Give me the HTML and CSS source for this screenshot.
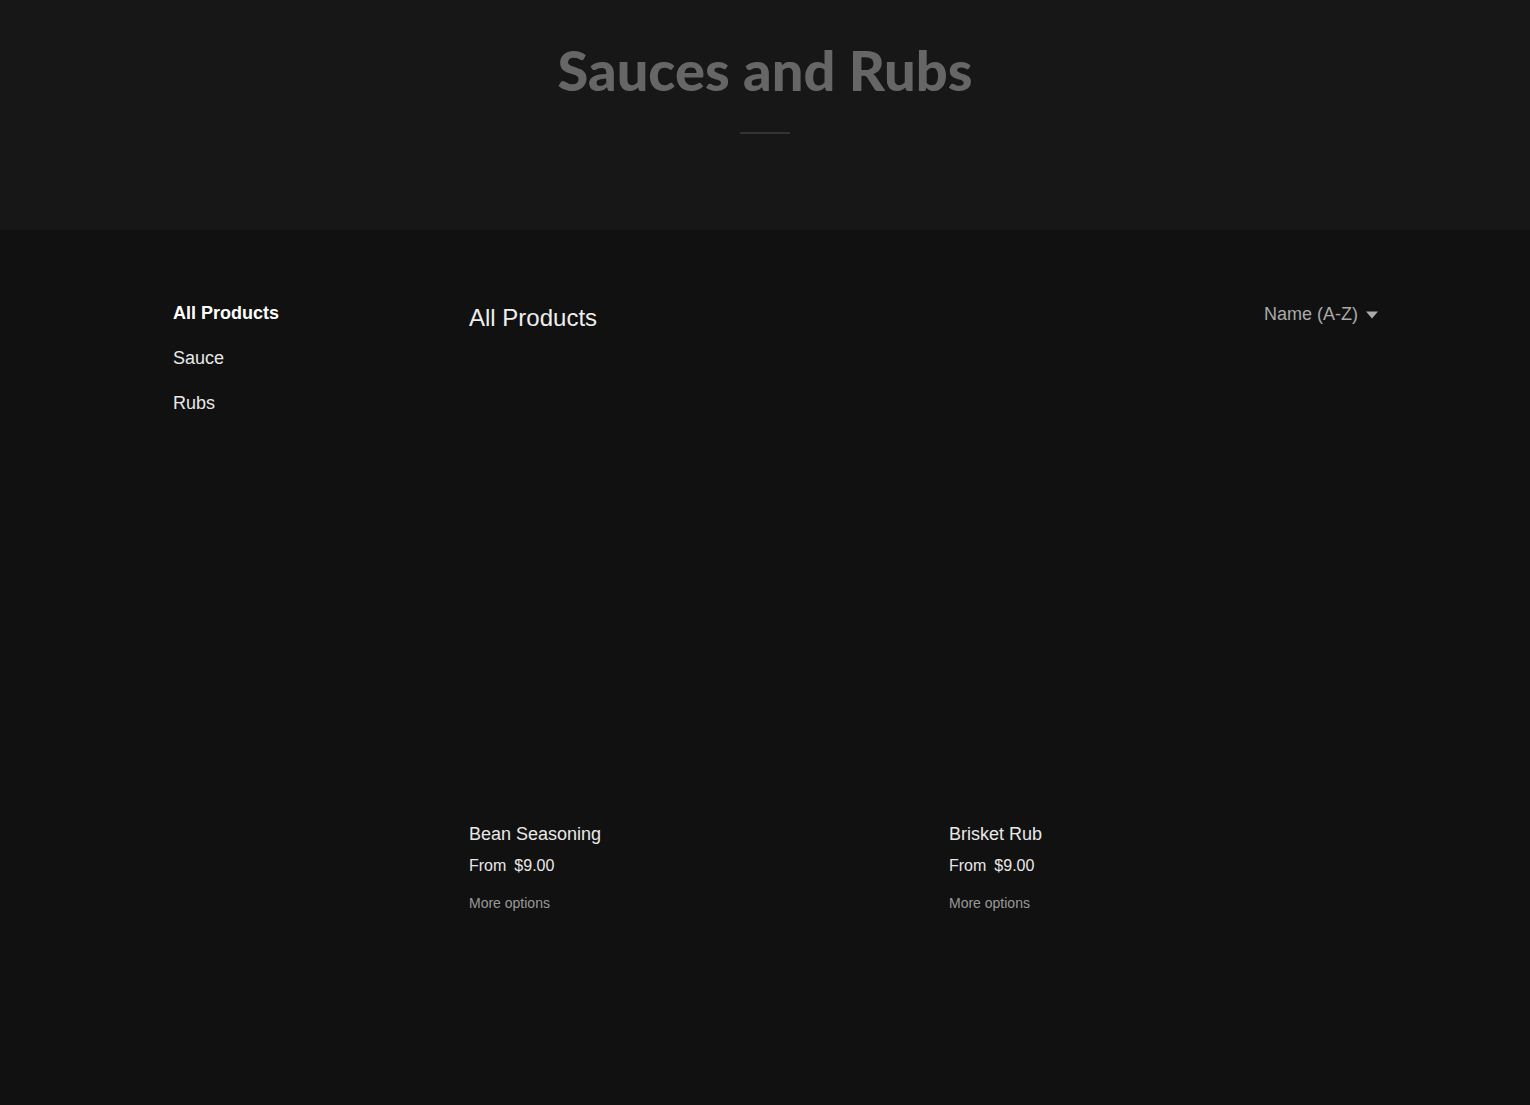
FILE: index.html
```html
<!DOCTYPE html>
<html lang="en">
<head>
<meta charset="utf-8">
<title>Sauces and Rubs</title>
<link rel="stylesheet" href="styles.css">
</head>
<body>
<header class="hero">
  <h1 class="hero-title">Sauces and Rubs</h1>
  <div class="hero-rule"></div>
</header>
<main class="shop">
  <nav class="cats">
    <a class="cat active" href="#">All Products</a>
    <a class="cat" href="#">Sauce</a>
    <a class="cat" href="#">Rubs</a>
  </nav>
  <section class="catalog">
    <div class="catalog-head">
      <h2 class="catalog-title">All Products</h2>
      <div class="sort">
        <span>Name (A-Z)</span>
        <svg class="caret" width="12" height="8" viewBox="0 0 12 8"><path d="M0 0.5h12L6 7.5z" fill="#aaaaaa"/></svg>
      </div>
    </div>
    <div class="grid">
      <article class="card">
        <div class="thumb"></div>
        <div class="name">Bean Seasoning</div>
        <div class="price"><span>From</span><span>$9.00</span></div>
        <a class="more" href="#">More options</a>
      </article>
      <article class="card">
        <div class="thumb"></div>
        <div class="name">Brisket Rub</div>
        <div class="price"><span>From</span><span>$9.00</span></div>
        <a class="more" href="#">More options</a>
      </article>
    </div>
  </section>
</main>
</body>
</html>
```

FILE: styles.css
```css
* { box-sizing: border-box; }
html, body { margin: 0; padding: 0; }
body {
  background: #111111;
  font-family: "Liberation Sans", Arial, sans-serif;
  color: #e8e8e8;
  min-height: 1105px;
}
.hero {
  background: #171717;
  height: 230px;
  padding-top: 36px;
  display: flex;
  flex-direction: column;
  align-items: center;
}
.hero-title {
  margin: 0;
  font-family: Lato, "Open Sans", sans-serif;
  font-weight: 900;
  font-size: 56px;
  line-height: 68px;
  color: #666666;
  letter-spacing: 0;
}
.hero-rule {
  margin-top: 28px;
  width: 50px;
  height: 2px;
  background: #333333;
}
.shop {
  display: flex;
  padding-left: 173px;
  padding-top: 73px;
}
.cats {
  width: 296px;
  display: flex;
  flex-direction: column;
  gap: 24px;
}
.cat {
  font-size: 18px;
  line-height: 21px;
  color: #e8e8e8;
  text-decoration: none;
}
.cat.active { font-weight: bold; color: #ffffff; }
.catalog { width: 909px; }
.catalog-head {
  display: flex;
  justify-content: space-between;
  align-items: flex-start;
}
.catalog-title {
  margin: 0;
  margin-top: 1px;
  font-weight: normal;
  font-size: 24px;
  line-height: 28px;
  color: #eeeeee;
}
.sort {
  display: flex;
  align-items: center;
  gap: 8px;
  font-size: 18px;
  line-height: 21px;
  color: #aaaaaa;
  margin-top: 1px;
}
.caret { display: block; }
.grid {
  display: grid;
  grid-template-columns: 440px 440px;
  column-gap: 40px;
  margin-top: 38px;
}
.thumb {
  width: 440px;
  height: 440px;
  background: #111111;
}
.name {
  margin-top: 13px;
  font-size: 18px;
  line-height: 22px;
  color: #e8e8e8;
}
.price {
  margin-top: 11px;
  display: flex;
  gap: 8px;
  font-size: 16px;
  line-height: 20px;
  color: #e8e8e8;
}
.more {
  display: block;
  margin-top: 19px;
  font-size: 14px;
  line-height: 16px;
  color: #999999;
  text-decoration: none;
}
```
